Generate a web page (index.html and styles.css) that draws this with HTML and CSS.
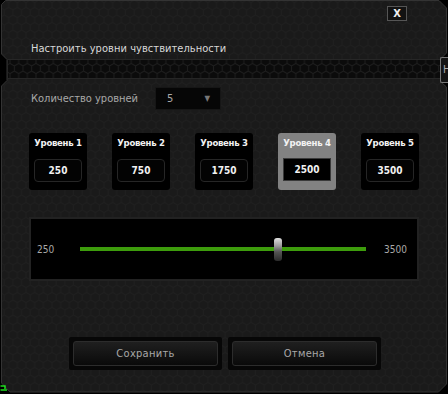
FILE: index.html
```html
<!DOCTYPE html>
<html lang="ru">
<head>
    <meta charset="UTF-8">
    <title>Настроить уровни чувствительности</title>
    <link rel="stylesheet" href="styles.css">
</head>
<body>
    <div class="window">
        <svg class="frame" width="448" height="394" viewBox="0 0 448 394">
            <defs>
                <pattern id="hexPanel" width="8.66" height="15" patternUnits="userSpaceOnUse">
                    <rect width="8.66" height="15" fill="#1a1a1a"/>
                    <path d="M4.33,0 L8.66,2.5 L8.66,7.5 L4.33,10 L0,7.5 L0,2.5 Z M4.33,10 L4.33,15" fill="none" stroke="#1f1f1f" stroke-width="1"/>
                </pattern>
            </defs>
            <polygon points="5.5,0.5 439,0.5 446.5,8 446.5,53 441,58.5 441,82 446.5,87 446.5,384 438.5,392 10,392 1.5,383 1.5,86 7,80.5 7,59.5 1.5,54 1.5,4.5"
                     fill="url(#hexPanel)" stroke="#333" stroke-width="1"/>
            <path d="M0.5,386 L5,386 L5,389 M0.5,390 L7,390" stroke="#1ee01e" stroke-width="1.5" fill="none"/>
        </svg>

        <div class="topbar">
            <button class="close">X</button>
        </div>

        <h1 class="title">Настроить уровни чувствительности</h1>

        <div class="band">
            <svg class="band-strip" width="432" height="20">
                <defs>
                    <pattern id="hexBand" width="8.66" height="15" patternUnits="userSpaceOnUse" x="2" y="-3">
                        <rect width="8.66" height="15" fill="#0b0b0b"/>
                        <path d="M4.33,0 L8.66,2.5 L8.66,7.5 L4.33,10 L0,7.5 L0,2.5 Z M4.33,10 L4.33,15" fill="none" stroke="#1e1e1e" stroke-width="1"/>
                    </pattern>
                </defs>
                <rect width="432" height="20" fill="url(#hexBand)"/>
                <line x1="0" y1="0.5" x2="432" y2="0.5" stroke="#262626"/>
                <line x1="0" y1="19.5" x2="432" y2="19.5" stroke="#262626"/>
            </svg>
            <div class="band-tab"><span>Н</span></div>
        </div>

        <div class="count-row">
            <span class="count-label">Количество уровней</span>
            <div class="select">
                <span>5</span>
                <span class="arrow">&#9660;</span>
            </div>
        </div>

        <div class="levels">
            <div class="level">
                <div class="level-name">Уровень 1</div>
                <div class="level-value">250</div>
            </div>
            <div class="level">
                <div class="level-name">Уровень 2</div>
                <div class="level-value">750</div>
            </div>
            <div class="level">
                <div class="level-name">Уровень 3</div>
                <div class="level-value">1750</div>
            </div>
            <div class="level active">
                <div class="level-name">Уровень 4</div>
                <div class="level-value">2500</div>
            </div>
            <div class="level">
                <div class="level-name">Уровень 5</div>
                <div class="level-value">3500</div>
            </div>
        </div>

        <div class="slider-box">
            <span class="slider-min">250</span>
            <div class="track">
                <div class="thumb" style="left: 69.2%"></div>
            </div>
            <span class="slider-max">3500</span>
        </div>

        <div class="actions">
            <div class="action"><button class="button">Сохранить</button></div>
            <div class="action"><button class="button">Отмена</button></div>
        </div>
    </div>
</body>
</html>
```

FILE: styles.css
```css
:root {
    --panel: #1a1a1a;
    --line: #2a2a2a;
    --text: #d8d8d8;
    --muted: #a8a8a8;
    --green: #3d9c0c;
}

* {
    margin: 0;
    padding: 0;
    box-sizing: border-box;
}

body {
    background: #000;
    font-family: "DejaVu Sans Condensed", "DejaVu Sans", sans-serif;
    font-stretch: condensed;
    color: var(--text);
}

.window {
    position: relative;
    width: 448px;
    height: 394px;
    overflow: hidden;
}

.frame {
    position: absolute;
    top: 0;
    left: 0;
    z-index: 0;
}

.window > *:not(.frame) {
    position: relative;
    z-index: 1;
}

.topbar {
    display: flex;
    justify-content: flex-end;
    padding: 6px 41px 0 0;
}

.close {
    width: 20px;
    height: 15px;
    background: #121212;
    border: 1px solid #555;
    color: #eee;
    font-family: "DejaVu Sans", sans-serif;
    font-size: 10px;
    font-weight: bold;
    line-height: 13px;
}

.title {
    margin: 21px 0 0 31px;
    font-size: 11px;
    font-weight: normal;
    line-height: 14px;
    letter-spacing: 0.05px;
    color: var(--text);
}

.band {
    display: flex;
    margin: 3px 0 0 8px;
    height: 20px;
}

.band-strip {
    display: block;
}

.band-tab {
    width: 8px;
    height: 26px;
    margin-top: -2px;
    border: 1px solid #777;
    border-right: none;
    border-radius: 2px 0 0 2px;
    background: #141414;
    overflow: hidden;
}

.band-tab span {
    display: block;
    padding: 5px 0 0 2px;
    font-size: 11px;
    line-height: 13px;
    color: #aaa;
}

.count-row {
    display: flex;
    align-items: center;
    gap: 16px;
    margin: 8px 0 0 31px;
}

.count-label {
    width: 108px;
    font-size: 11px;
    color: var(--muted);
    white-space: nowrap;
}

.select {
    display: flex;
    justify-content: space-between;
    align-items: center;
    width: 66px;
    height: 23px;
    padding: 0 10px 0 11px;
    background: #060606;
    border: 1px solid #161616;
    color: var(--muted);
    font-size: 11px;
}

.arrow {
    font-size: 8px;
    color: #777;
}

.levels {
    display: flex;
    gap: 25px;
    margin: 23px 0 0 29px;
}

.level {
    width: 58px;
    height: 57px;
    background: #000;
    border-radius: 3px;
    display: flex;
    flex-direction: column;
    align-items: center;
}

.level-name {
    margin-top: 3px;
    font-size: 9.5px;
    font-weight: bold;
    line-height: 14px;
    letter-spacing: -0.3px;
    color: #f2f2f2;
    white-space: nowrap;
}

.level-value {
    margin-top: 9px;
    width: 48px;
    height: 23px;
    border: 1px solid #262626;
    border-radius: 4px;
    background: #030303;
    font-size: 10px;
    font-weight: bold;
    line-height: 21px;
    text-align: center;
    color: #f2f2f2;
}

.level.active {
    background: #828282;
}

.level.active .level-value {
    margin-top: 8px;
    background: #000;
    border: 1px solid #3a3a3a;
    border-radius: 0;
}

.slider-box {
    display: flex;
    align-items: center;
    margin: 27px 0 0 29px;
    width: 390px;
    height: 64px;
    background: #000;
    border: 2px solid #222;
    padding: 0 10px 0 6px;
}

.slider-min,
.slider-max {
    font-size: 10px;
    color: var(--muted);
}

.slider-min {
    width: 43px;
}

.slider-max {
    margin-left: auto;
}

.track {
    position: relative;
    width: 286px;
    height: 4px;
    background: var(--green);
}

.thumb {
    position: absolute;
    top: -9px;
    width: 8px;
    height: 23px;
    margin-left: -4px;
    border-radius: 3px;
    background: linear-gradient(to bottom, #e0e0e0 0%, #9a9a9a 35%, #555 60%, #2a2a2a 100%);
}

.actions {
    display: flex;
    gap: 6px;
    margin: 56px 0 0 69px;
}

.action {
    width: 153px;
    height: 33px;
    padding: 4px;
    background: #070707;
    border-radius: 2px;
}

.button {
    width: 100%;
    height: 25px;
    background: linear-gradient(to bottom, #1f1f1f, #0a0a0a);
    border: 1px solid #2c2c2c;
    border-radius: 3px;
    color: var(--muted);
    font-family: inherit;
    font-stretch: condensed;
    font-size: 11px;
    letter-spacing: 0.3px;
}
```
